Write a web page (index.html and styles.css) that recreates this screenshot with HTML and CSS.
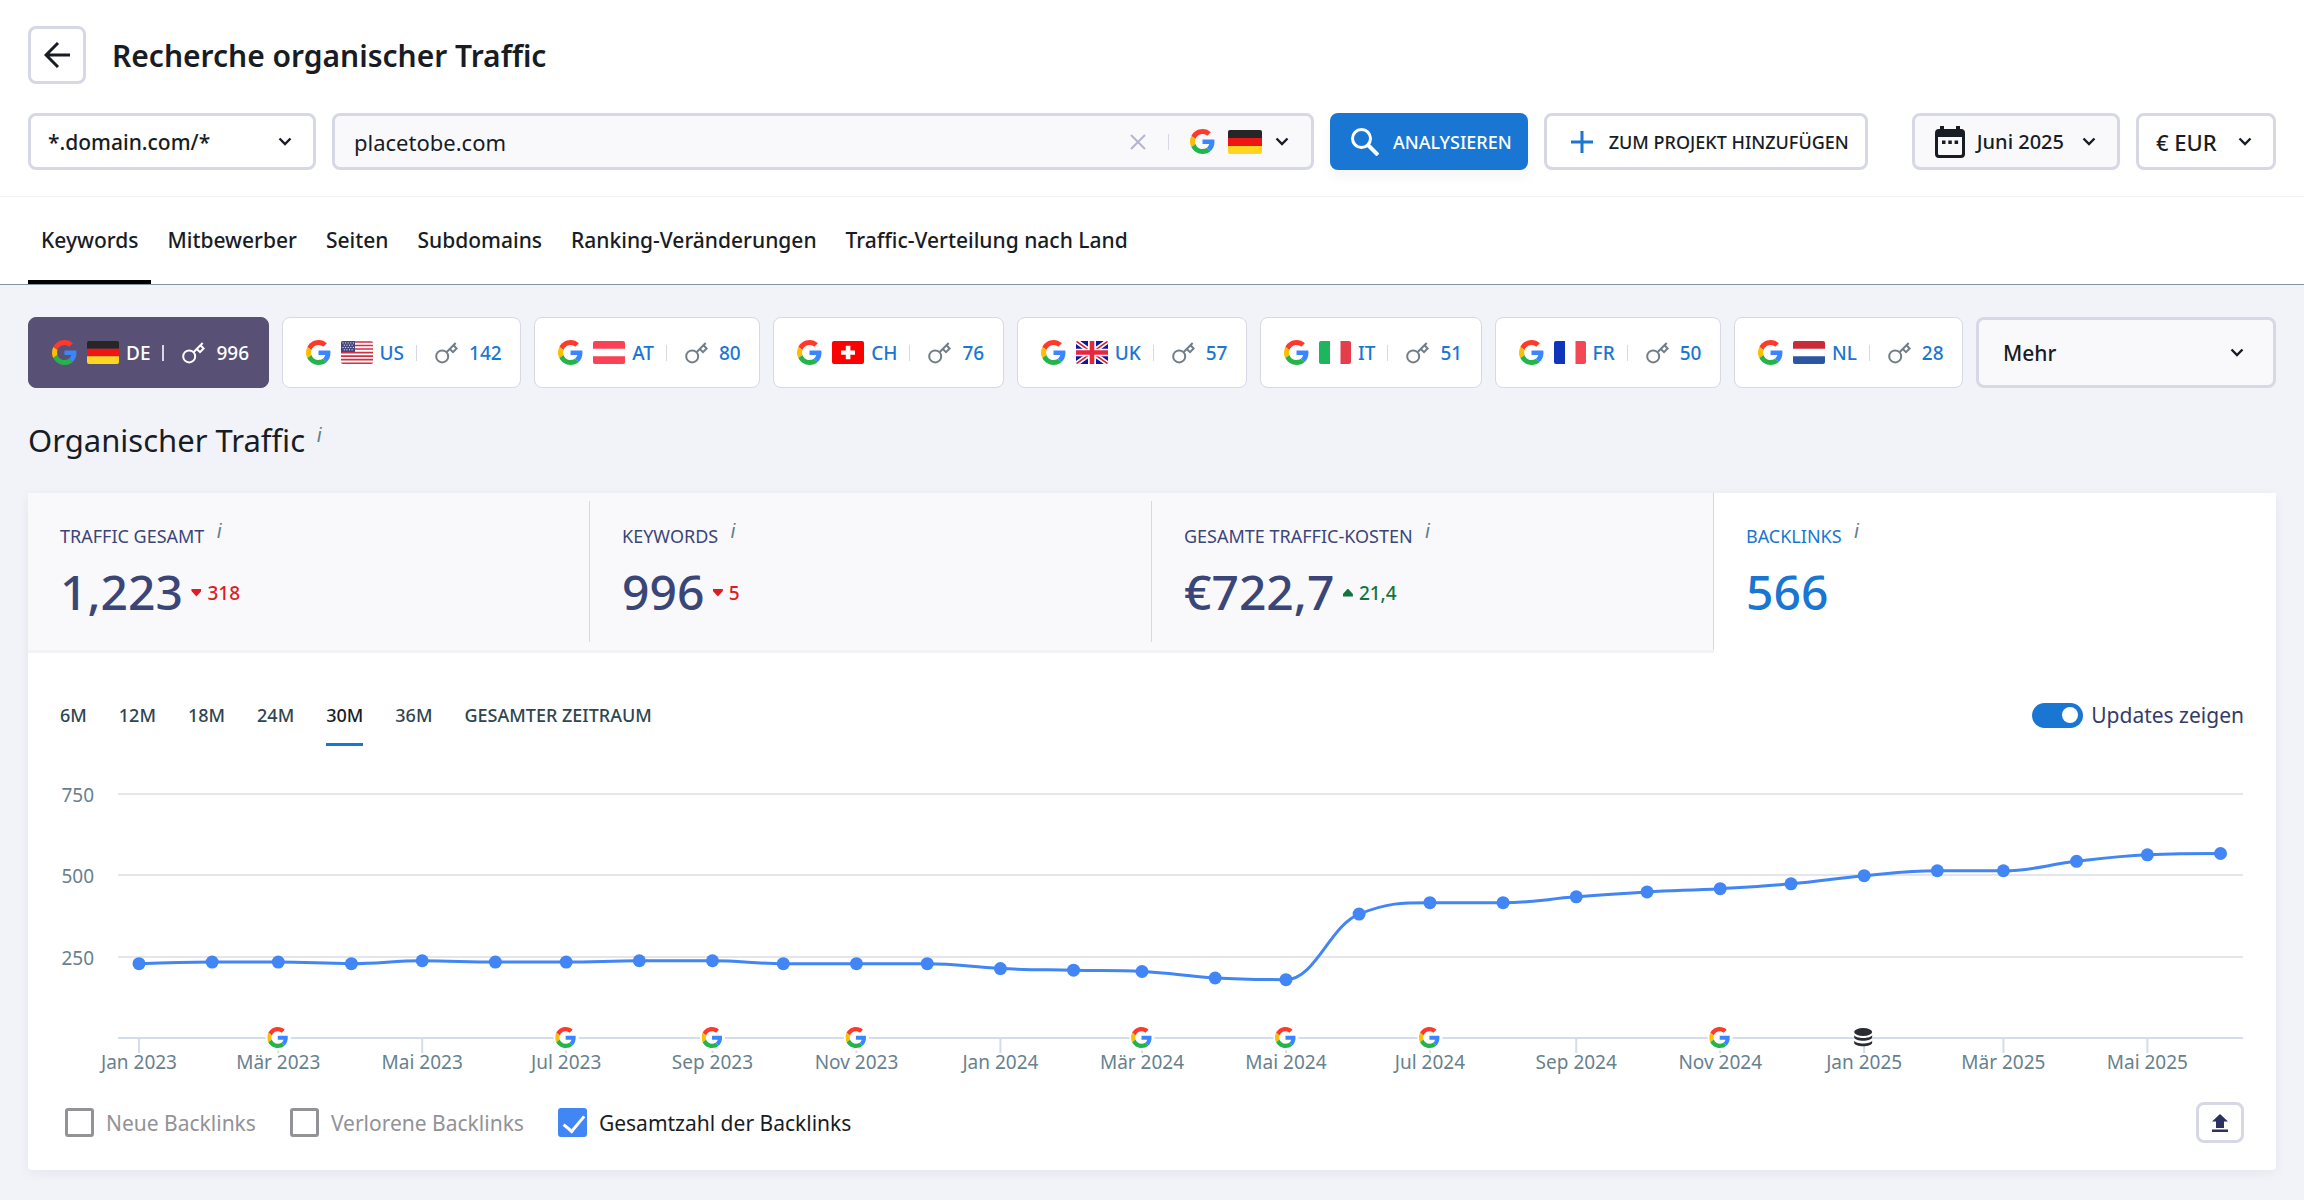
FILE: index.html
```
<!DOCTYPE html>
<html lang="de">
<head>
    <meta charset="UTF-8">
    <meta name="viewport" content="width=device-width, initial-scale=1.0">
    <title>Recherche organischer Traffic</title>
    <link rel="stylesheet" href="styles.css">
</head>
<body>
    <!-- Icon sprite -->
    <svg class="sprite" aria-hidden="true">
        <symbol id="google" viewBox="0 0 48 48">
            <path fill="#ff3a2b" d="M24 9.5c3.54 0 6.71 1.22 9.21 3.6l6.85-6.85C35.9 2.38 30.47 0 24 0 14.62 0 6.51 5.38 2.56 13.22l7.98 6.19C12.43 13.72 17.74 9.5 24 9.5z"/>
            <path fill="#3a86ff" d="M46.98 24.55c0-1.57-.15-3.09-.38-4.55H24v9.02h12.94c-.58 2.96-2.26 5.48-4.78 7.18l7.73 6c4.51-4.18 7.09-10.36 7.09-17.65z"/>
            <path fill="#fdbd00" d="M10.53 28.59c-.48-1.45-.76-2.99-.76-4.59s.27-3.14.76-4.59l-7.98-6.19C.92 16.46 0 20.12 0 24c0 3.88.92 7.54 2.56 10.78l7.97-6.19z"/>
            <path fill="#25b44b" d="M24 48c6.48 0 11.93-2.13 15.89-5.81l-7.73-6c-2.15 1.45-4.92 2.3-8.16 2.3-6.26 0-11.57-4.22-13.47-9.91l-7.98 6.19C6.51 42.62 14.62 48 24 48z"/>
        </symbol>
        <symbol id="chevron" viewBox="0 0 14 9">
            <path d="M1.5 1.5 7 7l5.5-5.5" fill="none" stroke="currentColor" stroke-width="2.4"/>
        </symbol>
        <symbol id="key" viewBox="0 0 23 22">
            <g fill="none" stroke="currentColor" stroke-width="2">
                <circle cx="7.2" cy="14.4" r="6"/>
                <path d="M11.5 10.2 20.7 1M14.8 7l3.2 3.100 3.600-3.600-3.100-3.200"/>
            </g>
        </symbol>
        <symbol id="flag-de" viewBox="0 0 32 24" preserveAspectRatio="none">
            <path fill="#262626" d="M0 0h32v8H0z"/><path fill="#f01515" d="M0 8h32v8H0z"/><path fill="#ffd521" d="M0 16h32v8H0z"/>
        </symbol>
        <symbol id="flag-us" viewBox="0 0 32 24" preserveAspectRatio="none">
            <path fill="#fff" d="M0 0h32v24H0z"/>
            <path stroke="#d02f44" stroke-width="1.7" d="M0 1h32M0 4.7h32M0 8.4h32M0 12.1h32M0 15.8h32M0 19.5h32M0 23.2h32"/>
            <path fill="#46467f" d="M0 0h14v11.5H0z"/>
            <path stroke="#fff" stroke-width="1" stroke-dasharray="1 1.6" d="M1.5 2h11.5M2.8 4.4h9M1.5 6.8h11.5M2.8 9.2h9"/>
        </symbol>
        <symbol id="flag-at" viewBox="0 0 32 24" preserveAspectRatio="none">
            <path fill="#fff" d="M0 0h32v24H0z"/><path fill="#fb4155" d="M0 0h32v8H0zM0 16h32v8H0z"/>
        </symbol>
        <symbol id="flag-ch" viewBox="0 0 32 24" preserveAspectRatio="none">
            <path fill="#f00" d="M0 0h32v24H0z"/><path fill="#fff" d="M13.8 5h4.6v4.8H23v4.6h-4.6V19h-4.6v-4.6H9V9.800h4.800z"/>
        </symbol>
        <symbol id="flag-uk" viewBox="0 0 32 24" preserveAspectRatio="none">
            <path fill="#0a17a7" d="M0 0h32v24H0z"/>
            <path stroke="#fff" stroke-width="5" d="M0 0l32 24M32 0 0 24"/>
            <path stroke="#db1f35" stroke-width="1.6" d="M0 0l32 24M32 0 0 24"/>
            <path stroke="#fff" stroke-width="8" d="M16 0v24M0 12h32"/>
            <path stroke="#e6273e" stroke-width="4.6" d="M16 0v24M0 12h32"/>
        </symbol>
        <symbol id="flag-it" viewBox="0 0 32 24" preserveAspectRatio="none">
            <path fill="#fff" d="M0 0h32v24H0z"/><path fill="#1cb65d" d="M0 0h11v24H0z"/><path fill="#e43d4c" d="M21.500 0H32v24H21.500z"/>
        </symbol>
        <symbol id="flag-fr" viewBox="0 0 32 24" preserveAspectRatio="none">
            <path fill="#fff" d="M0 0h32v24H0z"/><path fill="#1035bb" d="M0 0h11v24H0z"/><path fill="#f44653" d="M21.500 0H32v24H21.500z"/>
        </symbol>
        <symbol id="flag-nl" viewBox="0 0 32 24" preserveAspectRatio="none">
            <path fill="#fff" d="M0 0h32v24H0z"/><path fill="#ca2b39" d="M0 0h32v8H0z"/><path fill="#2c56a2" d="M0 16h32v8H0z"/>
        </symbol>
    </svg>

    <!-- Header -->
    <header class="header">
        <div class="title-row">
            <button class="box back-btn" aria-label="Zurück">
                <svg width="26" height="26" viewBox="0 0 26 26" fill="none" stroke="currentColor" stroke-width="3"><path d="M26 13H2M14 1 2 13l12 12"/></svg>
            </button>
            <h1>Recherche organischer Traffic</h1>
        </div>

        <div class="search-row">
            <div class="box select-box mode">
                <select aria-label="Suchmodus"><option>*.domain.com/*</option></select>
                <svg class="chevron"><use href="#chevron"/></svg>
            </div>
            <div class="box search-box">
                <input type="text" value="placetobe.com" aria-label="Domain">
                <button class="clear-btn" aria-label="Leeren">
                    <svg width="16" height="16" viewBox="0 0 16 16" fill="none" stroke="currentColor" stroke-width="2"><path d="M1 1l14 14M15 1 1 15"/></svg>
                </button>
                <span class="separator"></span>
                <button class="country-btn" aria-label="Suchmaschine: Google Deutschland">
                    <svg class="google"><use href="#google"/></svg>
                    <svg class="flag flag-lg"><use href="#flag-de"/></svg>
                    <svg class="chevron"><use href="#chevron"/></svg>
                </button>
            </div>
            <button class="primary-btn">
                <svg width="28" height="28" viewBox="0 0 28 28" fill="none" stroke="currentColor" stroke-width="3"><circle cx="10.500" cy="10.500" r="9"/><path d="M17 17l10 10" stroke-width="4"/></svg>
                ANALYSIEREN
            </button>
            <button class="box add-btn">
                <svg width="22" height="22" viewBox="0 0 22 22" stroke="#1976d2" stroke-width="3"><path d="M11 0v22M0 11h22"/></svg>
                ZUM PROJEKT HINZUFÜGEN
            </button>
            <div class="filters">
                <button class="box date-btn">
                    <svg width="30" height="32" viewBox="0 0 30 32">
                        <path fill="currentColor" fill-rule="evenodd" d="M5 0h4v3h12V0h4v3h1a4 4 0 0 1 4 4v21a4 4 0 0 1-4 4H4a4 4 0 0 1-4-4V7a4 4 0 0 1 4-4h1zM3 11v16.500a1.500 1.500 0 0 0 1.500 1.500h21a1.500 1.500 0 0 0 1.500-1.500V11zM7 14.500h3.500V18H7zM13.300 14.500h3.500V18h-3.500zM19.600 14.500h3.500V18h-3.500z"/>
                    </svg>
                    Juni 2025
                    <svg class="chevron"><use href="#chevron"/></svg>
                </button>
                <div class="box select-box currency">
                    <select aria-label="Währung"><option>€ EUR</option></select>
                    <svg class="chevron"><use href="#chevron"/></svg>
                </div>
            </div>
        </div>
    </header>

    <!-- Tabs -->
    <nav class="tabs">
        <a href="#keywords" class="active">Keywords</a>
        <a href="#mitbewerber">Mitbewerber</a>
        <a href="#seiten">Seiten</a>
        <a href="#subdomains">Subdomains</a>
        <a href="#ranking">Ranking-Veränderungen</a>
        <a href="#traffic">Traffic-Verteilung nach Land</a>
    </nav>

    <main>
        <!-- Countries -->
        <div class="countries">
            <button class="country active"><svg class="google"><use href="#google"/></svg><svg class="flag"><use href="#flag-de"/></svg>DE<span class="separator"></span><svg class="key"><use href="#key"/></svg>996</button>
            <button class="country"><svg class="google"><use href="#google"/></svg><svg class="flag"><use href="#flag-us"/></svg>US<span class="separator"></span><svg class="key"><use href="#key"/></svg>142</button>
            <button class="country"><svg class="google"><use href="#google"/></svg><svg class="flag"><use href="#flag-at"/></svg>AT<span class="separator"></span><svg class="key"><use href="#key"/></svg>80</button>
            <button class="country"><svg class="google"><use href="#google"/></svg><svg class="flag"><use href="#flag-ch"/></svg>CH<span class="separator"></span><svg class="key"><use href="#key"/></svg>76</button>
            <button class="country"><svg class="google"><use href="#google"/></svg><svg class="flag"><use href="#flag-uk"/></svg>UK<span class="separator"></span><svg class="key"><use href="#key"/></svg>57</button>
            <button class="country"><svg class="google"><use href="#google"/></svg><svg class="flag"><use href="#flag-it"/></svg>IT<span class="separator"></span><svg class="key"><use href="#key"/></svg>51</button>
            <button class="country"><svg class="google"><use href="#google"/></svg><svg class="flag"><use href="#flag-fr"/></svg>FR<span class="separator"></span><svg class="key"><use href="#key"/></svg>50</button>
            <button class="country"><svg class="google"><use href="#google"/></svg><svg class="flag"><use href="#flag-nl"/></svg>NL<span class="separator"></span><svg class="key"><use href="#key"/></svg>28</button>
            <div class="box select-box more">
                <select aria-label="Weitere Länder"><option>Mehr</option></select>
                <svg class="chevron"><use href="#chevron"/></svg>
            </div>
        </div>

        <h2>Organischer Traffic <i class="info">i</i></h2>

        <section class="card">
            <!-- Metrics -->
            <div class="metrics">
                <button class="metric">
                    <span class="metric-label">TRAFFIC GESAMT <i class="info">i</i></span>
                    <span class="metric-value">1,223 <small class="down">318</small></span>
                </button>
                <button class="metric">
                    <span class="metric-label">KEYWORDS <i class="info">i</i></span>
                    <span class="metric-value">996 <small class="down">5</small></span>
                </button>
                <button class="metric">
                    <span class="metric-label">GESAMTE TRAFFIC-KOSTEN <i class="info">i</i></span>
                    <span class="metric-value">€722,7 <small class="up">21,4</small></span>
                </button>
                <button class="metric active">
                    <span class="metric-label">BACKLINKS <i class="info">i</i></span>
                    <span class="metric-value">566</span>
                </button>
            </div>

            <!-- Period -->
            <div class="toolbar">
                <div class="periods">
                    <button>6M</button>
                    <button>12M</button>
                    <button>18M</button>
                    <button>24M</button>
                    <button class="active">30M</button>
                    <button>36M</button>
                    <button>GESAMTER ZEITRAUM</button>
                </div>
                <label class="toggle"><input type="checkbox" checked> Updates zeigen</label>
            </div>

            <svg class="chart" id="chart" viewBox="0 0 2248 310" role="img" aria-label="Backlinks pro Monat"></svg>

            <!-- Legend -->
            <div class="legend">
                <label><input type="checkbox"> Neue Backlinks</label>
                <label><input type="checkbox"> Verlorene Backlinks</label>
                <label><input type="checkbox" checked> Gesamtzahl der Backlinks</label>
                <button class="box export-btn" aria-label="Exportieren">
                    <svg width="16" height="18" viewBox="0 0 16 18" fill="currentColor"><path d="M8 0l8 7.500h-4V14H4V7.500H0zM0 15.500h16V18H0z"/></svg>
                </button>
            </div>
        </section>
    </main>

    <script src="script.js"></script>
</body>
</html>
```
FILE: styles.css
```
* {
    margin: 0;
    padding: 0;
    box-sizing: border-box;
}

body {
    background: #f2f3f8;
    color: #181c25;
    font-family: 'Noto Sans', sans-serif;
    font-size: 20px;
}

button,
input,
select {
    font: inherit;
    color: inherit;
    background: none;
    border: none;
    outline: none;
}

button,
select {
    cursor: pointer;
}

svg {
    flex: none;
}

.sprite {
    position: absolute;
    width: 0;
    height: 0;
}

.box {
    background: #fff;
    border: 3px solid #d6d8e5;
    border-radius: 8px;
}

.google {
    width: 25px;
    height: 25px;
}

.flag {
    width: 32px;
    height: 23px;
    border-radius: 2px;
}

.flag-lg {
    width: 34px;
    height: 24px;
}

.key {
    width: 23px;
    height: 22px;
    color: #717e88;
}

.chevron {
    width: 14px;
    height: 9px;
}

.separator {
    width: 1px;
    height: 16px;
    background: #d6d8e5;
}

/* Header */
.header {
    background: #fff;
    padding: 26px 28px;
    border-bottom: 1px solid #f0f1f4;
}

.title-row {
    display: flex;
    align-items: center;
    gap: 26px;
    margin-bottom: 29px;
}

.back-btn {
    width: 58px;
    height: 58px;
    display: flex;
    align-items: center;
    justify-content: center;
}

h1 {
    padding-top: 2px;
    font-size: 30px;
    line-height: 40px;
    font-weight: 600;
}

.search-row {
    display: flex;
    gap: 16px;
    height: 57px;
}

.select-box {
    display: flex;
    align-items: center;
    position: relative;
}

.select-box select {
    appearance: none;
    width: 100%;
    height: 100%;
    padding: 0 17px;
    font-size: 21px;
    font-weight: 500;
}

.select-box .chevron {
    position: absolute;
    right: 21px;
    pointer-events: none;
}

.mode {
    width: 288px;
}

.search-box {
    flex: 1;
    display: flex;
    align-items: center;
    padding: 0 22px 0 19px;
    background: #f9f9fc;
}

.search-box input {
    flex: 1;
    min-width: 0;
    font-size: 22px;
}

.clear-btn {
    display: flex;
    color: #b2b5cc;
    margin-right: 22px;
}

.country-btn {
    display: flex;
    align-items: center;
    gap: 13px;
    margin-left: 21px;
}

.primary-btn,
.add-btn {
    display: flex;
    align-items: center;
    font-size: 18px;
    font-weight: 500;
    white-space: nowrap;
}

.primary-btn {
    gap: 14px;
    padding: 0 16px 0 21px;
    color: #fff;
    background: #1976d2;
    border-radius: 8px;
    box-shadow: 0 8px 12px rgba(0, 0, 0, 0.04);
}

.add-btn {
    gap: 16px;
    padding: 0 16px 0 24px;
}

.filters {
    display: flex;
    gap: 16px;
    margin-left: 28px;
}

.date-btn {
    display: flex;
    align-items: center;
    gap: 12px;
    padding: 0 21px 0 20px;
    background: #f9f9fc;
    font-weight: 500;
}

.date-btn .chevron {
    margin-left: 6px;
}

.currency {
    width: 140px;
}

.currency select {
    font-size: 22px;
}

/* Tabs */
.tabs {
    display: flex;
    gap: 3px;
    padding: 0 28px;
    background: #fff;
    border-bottom: 1px solid #8593a0;
}

.tabs a {
    padding: 28px 13px 25px;
    line-height: 30px;
    border-bottom: 4px solid transparent;
    color: inherit;
    font-size: 21px;
    font-weight: 500;
    text-decoration: none;
}

.tabs .active {
    border-color: #000;
}

main {
    padding: 32px 28px 28px;
}

/* Countries */
.countries {
    display: flex;
    gap: 13px;
    height: 71px;
}

.country {
    flex: auto;
    display: flex;
    align-items: center;
    padding: 0 18px 0 23px;
    background: #fff;
    border: 1px solid #d6d8e5;
    border-radius: 8px;
    color: #1976d2;
    font-size: 19px;
    font-weight: 500;
}

.country.active {
    background: #585175;
    border-color: #585175;
    color: #fff;
}

.country.active .key {
    color: #fff;
}

.country.active .separator {
    width: 2px;
}

.country .flag {
    margin: 0 7px 0 10px;
}

.country .separator {
    margin: 0 18px 0 12px;
}

.country .key {
    margin-right: 11px;
}

.more {
    width: 300px;
    background: #f9f9fc;
}

.more select {
    padding-left: 24px;
}

.more .chevron {
    right: 29px;
}

h2 {
    margin: 32px 0 33px;
    font-size: 31px;
    line-height: 40px;
    font-weight: 400;
}

.info {
    margin-left: 4px;
    vertical-align: 5px;
    color: #5f7f8c;
    font-family: 'Liberation Sans', sans-serif;
    font-size: 20px;
    line-height: 18px;
}

h2 .info {
    vertical-align: 10px;
}

/* Card */
.card {
    background: #fff;
    border-radius: 0 0 4px 4px;
    box-shadow: 0 3px 12px rgba(30, 40, 90, 0.06);
}

.metrics {
    display: grid;
    grid-template-columns: repeat(4, 1fr);
}

.metric {
    position: relative;
    height: 160px;
    padding: 0 32px;
    background: #f9f9fc;
    border-bottom: 3px solid #f2f3f8;
    color: #3b4678;
    text-align: left;
}

.metric::after {
    content: '';
    position: absolute;
    top: 8px;
    right: 0;
    bottom: 8px;
    width: 1px;
    background: #d6d8e5;
}

.metric:nth-child(3)::after {
    top: 0;
    bottom: 0;
}

.metric.active {
    background: #fff;
    border-color: #fff;
    color: #1976d2;
}

.metric.active::after {
    display: none;
}

.metric-label,
.metric-value {
    display: block;
}

.metric-label {
    font-size: 18px;
    line-height: 28px;
}

.metric-label .info {
    margin-left: 8px;
}

.metric-value {
    font-size: 48px;
    line-height: 60px;
    font-weight: 500;
    margin-top: 12px;
}

.metric-value small {
    display: inline-flex;
    align-items: center;
    gap: 6px;
    margin-left: -4px;
    vertical-align: 13px;
    font-size: 19px;
    line-height: 24px;
}

.metric-value small::before {
    content: '';
    width: 10px;
    height: 8px;
    background: currentColor;
}

.down {
    color: #df1c26;
}

.down::before {
    clip-path: polygon(0 0, 100% 0, 100% 30%, 50% 100%, 0 30%);
}

.up {
    color: #12753f;
}

.up::before {
    clip-path: polygon(50% 0, 100% 70%, 100% 100%, 0 100%, 0 70%);
}

.toolbar {
    display: flex;
    justify-content: space-between;
    align-items: flex-start;
    padding: 46px 32px 0;
    height: 123px;
}

.periods {
    display: flex;
    gap: 32px;
}

.periods button {
    height: 47px;
    padding-bottom: 13px;
    border-bottom: 3px solid transparent;
    color: #2f4550;
    font-size: 18px;
    font-weight: 500;
}

.periods .active {
    border-color: #1976d2;
    color: #181c25;
}

.toggle {
    display: flex;
    align-items: center;
    gap: 8px;
    line-height: 32px;
    color: #333c68;
    font-size: 21px;
}

.toggle input {
    appearance: none;
    width: 51px;
    height: 25px;
    padding: 4px 5px;
    border-radius: 13px;
    background: #1976d2;
}

.toggle input::before {
    content: '';
    display: block;
    width: 16px;
    height: 16px;
    margin-left: auto;
    border-radius: 50%;
    background: #fff;
}

/* Chart */
.chart {
    display: block;
    width: 100%;
    font-size: 19px;
    fill: #67818e;
}

.grid-line {
    stroke: #e5e6e9;
    stroke-width: 2;
}

.axis {
    stroke: #d3ddec;
    stroke-width: 2;
}

.line {
    fill: none;
    stroke: #4285f4;
    stroke-width: 3;
}

.dot {
    fill: #4285f4;
}

.axis-label {
    text-anchor: middle;
}

.value-label {
    text-anchor: end;
}

/* Legend */
.legend {
    display: flex;
    align-items: center;
    gap: 34px;
    padding: 16px 32px 27px 37px;
}

.legend label {
    display: flex;
    align-items: center;
    gap: 12px;
    color: #929297;
    font-size: 21px;
}

.legend label:has(:checked) {
    color: #181c25;
}

.legend input {
    appearance: none;
    width: 29px;
    height: 29px;
    border: 3px solid #939297;
    border-radius: 3px;
}

.legend input:checked {
    border: none;
    background: #4285f4;
}

.legend input:checked::before {
    content: '';
    display: block;
    width: 9px;
    height: 18px;
    margin: 3px 0 0 10px;
    border: solid #fff;
    border-width: 0 3px 3px 0;
    transform: rotate(40deg);
}

.export-btn {
    display: flex;
    align-items: center;
    justify-content: center;
    width: 48px;
    height: 41px;
    margin-left: auto;
    color: #2b3260;
}
```
FILE: script.js
```
const months = ['Jan', 'Feb', 'Mär', 'Apr', 'Mai', 'Jun', 'Jul', 'Aug', 'Sep', 'Okt', 'Nov', 'Dez'];

// Backlinks, Januar 2023 bis Juni 2025
const backlinks = [
    228, 233, 233, 228, 237, 233, 233, 237, 237, 228, 228, 228,
    213, 208, 204, 184, 179, 380, 415, 415, 433, 448, 458, 473,
    498, 513, 513, 542, 562, 566
];

const googleUpdates = [2, 6, 8, 10, 14, 16, 18, 22];
const databaseUpdates = [24];

const left = 90;
const right = 2215;
const base = 262;
const day = 24 * 3600 * 1000;
const start = Date.UTC(2023, 0, 1);

const points = backlinks.map((value, i) => ({
    x: 111 + (Date.UTC(2023, i, 1) - start) / day * 2.36,
    y: base - value * 0.326
}));

// Kontrollpunkte, damit die Kurve nicht überschwingt
function controls(prev, p, next) {
    const l = { x: (1.5 * p.x + prev.x) / 2.5, y: (1.5 * p.y + prev.y) / 2.5 };
    const r = { x: (1.5 * p.x + next.x) / 2.5, y: (1.5 * p.y + next.y) / 2.5 };
    const fix = (r.y - l.y) * (r.x - p.x) / (r.x - l.x) + p.y - r.y;
    l.y += fix;
    r.y += fix;

    const clamp = (y, a, b) => Math.min(Math.max(y, Math.min(a, b)), Math.max(a, b));
    l.y = clamp(l.y, prev.y, p.y);
    r.y = 2 * p.y - l.y;
    const limited = clamp(r.y, next.y, p.y);
    if (limited !== r.y) {
        r.y = limited;
        l.y = 2 * p.y - r.y;
    }
    return { l, r };
}

function linePath() {
    let d = `M${points[0].x} ${points[0].y}`;
    let out = points[0];
    for (let i = 1; i < points.length; i++) {
        const p = points[i];
        const c = points[i + 1] ? controls(points[i - 1], p, points[i + 1]) : { l: p, r: p };
        d += `C${out.x} ${out.y} ${c.l.x} ${c.l.y} ${p.x} ${p.y}`;
        out = c.r;
    }
    return d;
}

function drawChart() {
    let svg = '';

    [750, 500, 250].forEach(value => {
        const y = Math.round(base - value * 0.326);
        svg += `<line class="grid-line" x1="${left}" x2="${right}" y1="${y}" y2="${y}"/>`;
        svg += `<text class="value-label" x="66" y="${y + 8}">${value}</text>`;
    });
    svg += `<line class="axis" x1="${left}" x2="${right}" y1="${base}" y2="${base}"/>`;

    points.forEach((p, i) => {
        if (i % 2) return;
        if (i < points.length - 1) {
            svg += `<line class="axis" x1="${p.x}" x2="${p.x}" y1="${base}" y2="${base + 15}"/>`;
            svg += `<text class="axis-label" x="${p.x}" y="${base + 31}">${months[i % 12]} ${2023 + Math.floor(i / 12)}</text>`;
        }
    });

    svg += `<path class="line" d="${linePath()}"/>`;
    points.forEach(p => {
        svg += `<circle class="dot" cx="${p.x}" cy="${p.y}" r="6.5"/>`;
    });

    googleUpdates.forEach(i => {
        const x = points[i].x;
        svg += `<circle cx="${x}" cy="${base}" r="12.5" fill="#fff"/>`;
        svg += `<use href="#google" x="${x - 11}" y="${base - 11}" width="21" height="21"/>`;
    });

    databaseUpdates.forEach(i => {
        svg += `<g transform="translate(${points[i].x - 10} ${base - 10})">
            <path fill="#fff" d="M0 4h18v13H0z"/>
            <ellipse cx="9" cy="4" rx="9" ry="4" fill="#2b2c33"/>
            <path fill="#2b2c33" d="M0 7c1 4 17 4 18 0v2c0 5-18 5-18 0zM0 12.500c1 4 17 4 18 0v2c0 5-18 5-18 0z"/>
        </g>`;
    });

    document.getElementById('chart').innerHTML = svg;
}

drawChart();
```
